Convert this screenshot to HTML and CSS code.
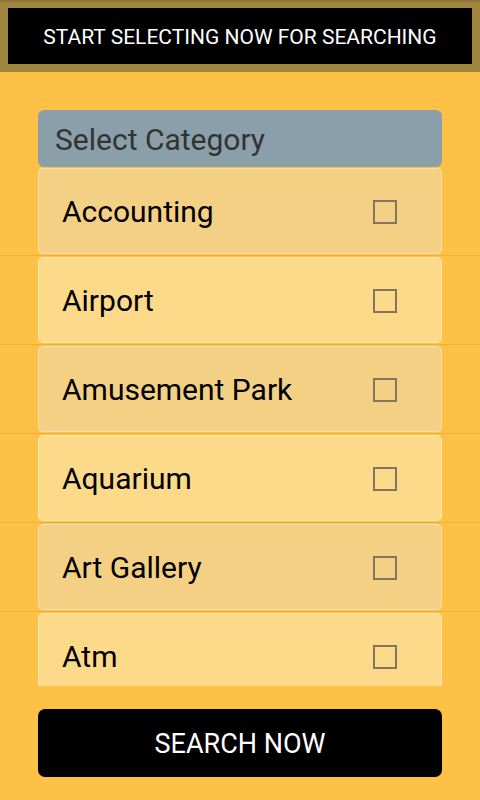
FILE: index.html
```html
<!DOCTYPE html>
<html lang="en">
<head>
  <meta charset="UTF-8">
  <meta name="viewport" content="width=device-width, initial-scale=1.0">
  <title>Select Category</title>
  <link rel="stylesheet" href="styles.css">
</head>
<body>
  <header class="top">
    <div class="top-title">START SELECTING NOW FOR SEARCHING</div>
  </header>

  <div class="content">
    <div class="category-head">Select Category</div>

    <ul class="category-list">
      <li><div class="item"><span>Accounting</span><span class="check"></span></div></li>
      <li><div class="item"><span>Airport</span><span class="check"></span></div></li>
      <li><div class="item"><span>Amusement Park</span><span class="check"></span></div></li>
      <li><div class="item"><span>Aquarium</span><span class="check"></span></div></li>
      <li><div class="item"><span>Art Gallery</span><span class="check"></span></div></li>
      <li><div class="item"><span>Atm</span><span class="check"></span></div></li>
    </ul>

    <button class="search-btn">SEARCH NOW</button>
  </div>
</body>
</html>
```

FILE: styles.css
```css
body {
  margin: 0;
  width: 480px;
  height: 800px;
  background: #fdc145;
  font-family: Roboto, "Liberation Sans", sans-serif;
  overflow: hidden;
}

.top {
  background: #a2863e;
  padding: 8px;
  border-top: 2px solid #8e7536;
  padding-top: 6px;
}

.top-title {
  background: #000;
  color: #fff;
  height: 56px;
  display: flex;
  align-items: center;
  justify-content: center;
  font-size: 21px;
  padding-top: 1px;
  box-sizing: border-box;
}

.content {
  padding-top: 38px;
}

.category-head {
  margin: 0 38px;
  height: 57px;
  background: #8a9faa;
  border-radius: 6px;
  color: #333;
  font-size: 30px;
  display: flex;
  align-items: center;
  padding-left: 17px;
  padding-top: 2px;
  box-sizing: border-box;
}

.category-list {
  list-style: none;
  margin: 0;
  padding: 0;
  height: 519px;
  overflow: hidden;
}

.category-list li {
  padding: 1px 38px;
  border-bottom: 1px solid #efb036;
}

.item {
  height: 86px;
  box-sizing: border-box;
  border: 1px solid rgba(255, 255, 255, 0.35);
  border-radius: 5px;
  background: #fdd98a;
  display: flex;
  align-items: center;
  justify-content: space-between;
  padding: 1px 44px 0 23px;
  font-size: 30px;
  color: #000;
}

.category-list li:nth-child(odd) .item {
  background: #f4d085;
}

.check {
  width: 24px;
  height: 24px;
  box-sizing: border-box;
  border: 2px solid #837560;
}

.search-btn {
  display: block;
  margin: 23px 38px 0;
  width: 404px;
  height: 68px;
  background: #000;
  color: #fff;
  border: none;
  border-radius: 7px;
  font-family: Roboto, "Liberation Sans", sans-serif;
  font-size: 27px;
  padding-top: 2px;
}
```
